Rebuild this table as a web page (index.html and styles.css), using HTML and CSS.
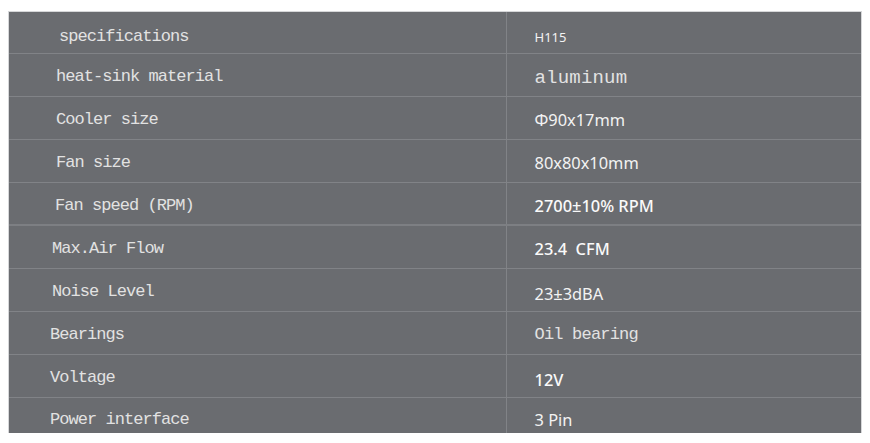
FILE: index.html
```html
<!DOCTYPE html>
<html lang="en">
<head>
<meta charset="utf-8">
<title>H115 specifications</title>
<link rel="stylesheet" href="styles.css">
</head>
<body>
<table class="spec">
  <colgroup>
    <col class="c-key">
    <col class="c-val">
  </colgroup>
  <tbody>
    <tr class="r-head">
      <td class="k ka">specifications</td>
      <td class="v v-small">H115</td>
    </tr>
    <tr>
      <td class="k kb">heat-sink material</td>
      <td class="v v-mono-lg">aluminum</td>
    </tr>
    <tr>
      <td class="k kb">Cooler size</td>
      <td class="v">Φ90x17mm</td>
    </tr>
    <tr>
      <td class="k kb">Fan size</td>
      <td class="v">80x80x10mm</td>
    </tr>
    <tr>
      <td class="k kc">Fan speed (RPM)</td>
      <td class="v v-strong">2700±10% RPM</td>
    </tr>
    <tr class="r-double">
      <td class="k kd">Max.Air Flow</td>
      <td class="v v-strong">23.4&nbsp; CFM</td>
    </tr>
    <tr>
      <td class="k kd">Noise Level</td>
      <td class="v v-low">23±3dBA</td>
    </tr>
    <tr>
      <td class="k ke">Bearings</td>
      <td class="v v-mono">Oil bearing</td>
    </tr>
    <tr>
      <td class="k ke">Voltage</td>
      <td class="v v-strong v-low">12V</td>
    </tr>
    <tr class="r-last">
      <td class="k ke k-low">Power interface</td>
      <td class="v v-low">3 Pin</td>
    </tr>
  </tbody>
</table>
</body>
</html>
```

FILE: styles.css
```css
html, body {
  margin: 0;
  padding: 0;
  background: #ffffff;
}

body {
  padding: 12px 0 0 9px;
}

.spec {
  border-collapse: collapse;
  width: 852px;
  background: #6a6c70;
  table-layout: fixed;
  outline: 1px solid #d6d7d9;
}

.c-key {
  width: 497px;
}

.spec tr {
  height: 43px;
}

.spec tr.r-head {
  height: 41px;
}

.spec tr.r-last {
  height: 36px;
}

.spec td {
  box-sizing: border-box;
  padding: 0;
  vertical-align: middle;
  border-top: 1px solid #818387;
}

.spec tr.r-head td {
  border-top: none;
}

.spec tr.r-double td {
  border-top: 2px solid #7d7f83;
}

.k {
  border-right: 1px solid #818387;
  font-family: "Liberation Mono", "DejaVu Sans Mono", monospace;
  font-size: 17px;
  letter-spacing: -0.95px;
  color: #e2e2e2;
  padding-top: 4px !important;
  white-space: nowrap;
}

.ka { padding-left: 50px !important; padding-top: 8px !important; }
.kb { padding-left: 47px !important; }
.kc { padding-left: 46px !important; }
.kd { padding-left: 43px !important; }
.ke { padding-left: 41px !important; }
.k-low { padding-top: 9px !important; }

.v {
  padding-left: 28px !important;
  padding-top: 4px !important;
  font-family: "Noto Sans", "Open Sans", sans-serif;
  font-size: 16.4px;
  color: #f3f3f3;
  white-space: nowrap;
}

.v-small {
  font-size: 13px;
  padding-top: 10px !important;
}

.v-mono-lg {
  font-family: "Liberation Mono", "DejaVu Sans Mono", monospace;
  font-size: 19px;
  letter-spacing: 0.2px;
  color: #e2e2e2;
  padding-top: 6px !important;
}

.v-mono {
  font-family: "Liberation Mono", "DejaVu Sans Mono", monospace;
  font-size: 17px;
  letter-spacing: -0.8px;
  color: #e2e2e2;
}

.v-strong {
  font-weight: 500;
  color: #fafafa;
}

.v-low {
  padding-top: 8px !important;
}
```
